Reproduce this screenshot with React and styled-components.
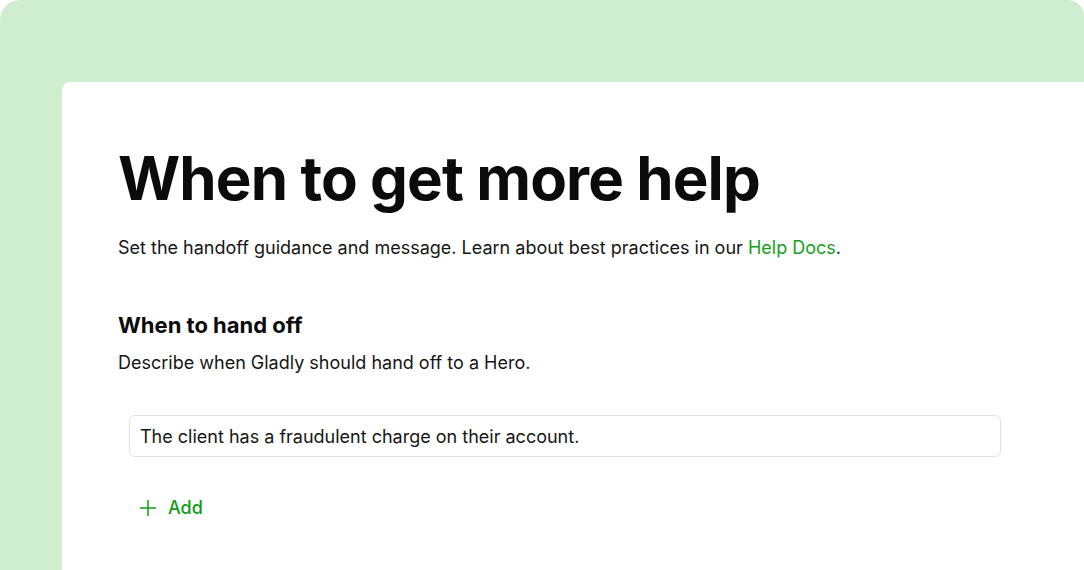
import React from 'react';
import styled, { createGlobalStyle } from 'styled-components';

const GlobalStyle = createGlobalStyle`
  html, body {
    margin: 0;
    padding: 0;
    background: #ffffff;
  }
  body {
    font-family: Inter, "Noto Sans", sans-serif;
    color: #111111;
  }
`;

const Backdrop = styled.div`
  width: 1084px;
  height: 570px;
  box-sizing: border-box;
  background: #cfeecf;
  border-radius: 20px 16px 0 0;
  padding: 82px 0 0 62px;
  display: flex;
  overflow: hidden;
`;

const Card = styled.div`
  flex: 1;
  background: #ffffff;
  border-radius: 8px 0 0 0;
  padding: 60px 83px 0 56px;
  display: flex;
  flex-direction: column;
`;

const Title = styled.h1`
  margin: 0;
  font-size: 60px;
  line-height: 72px;
  font-weight: 700;
  letter-spacing: -0.9px;
  color: #0b0b0b;
`;

const Lead = styled.p`
  margin: 20px 0 0;
  font-size: 18px;
  line-height: 28px;
  color: #161616;
`;

const Link = styled.a`
  color: #16a01e;
  text-decoration: none;
`;

const SectionTitle = styled.h2`
  margin: 48px 0 0;
  font-size: 22px;
  line-height: 30px;
  font-weight: 700;
  color: #0b0b0b;
`;

const SectionText = styled.p`
  margin: 9px 0 0;
  font-size: 18px;
  line-height: 28px;
  color: #161616;
`;

const List = styled.div`
  margin: 38px 0 0 11px;
  display: flex;
  flex-direction: column;
`;

const Field = styled.div`
  height: 42px;
  box-sizing: border-box;
  border: 1px solid #e2e2e2;
  border-radius: 6px;
  padding: 0 10px;
  display: flex;
  align-items: center;
  font-size: 18px;
  color: #161616;
`;

const AddButton = styled.button`
  margin: 39px 0 0 21px;
  padding: 0;
  border: none;
  background: none;
  display: flex;
  align-items: center;
  gap: 11px;
  align-self: flex-start;
  font-family: inherit;
  font-size: 18px;
  line-height: 24px;
  font-weight: 500;
  color: #119c19;
  cursor: pointer;
`;

const PlusIcon = () => (
  <svg width="18" height="18" viewBox="0 0 18 18" fill="none">
    <path d="M9 1v16M1 9h16" stroke="#119c19" strokeWidth="1.5" />
  </svg>
);

export default function App() {
  return (
    <>
      <GlobalStyle />
      <Backdrop>
        <Card>
          <Title>When to get more help</Title>
          <Lead>
            Set the handoff guidance and message. Learn about best practices in our{' '}
            <Link href="#">Help Docs</Link>.
          </Lead>
          <SectionTitle>When to hand off</SectionTitle>
          <SectionText>Describe when Gladly should hand off to a Hero.</SectionText>
          <List>
            <Field>The client has a fraudulent charge on their account.</Field>
          </List>
          <AddButton>
            <PlusIcon />
            Add
          </AddButton>
        </Card>
      </Backdrop>
    </>
  );
}
